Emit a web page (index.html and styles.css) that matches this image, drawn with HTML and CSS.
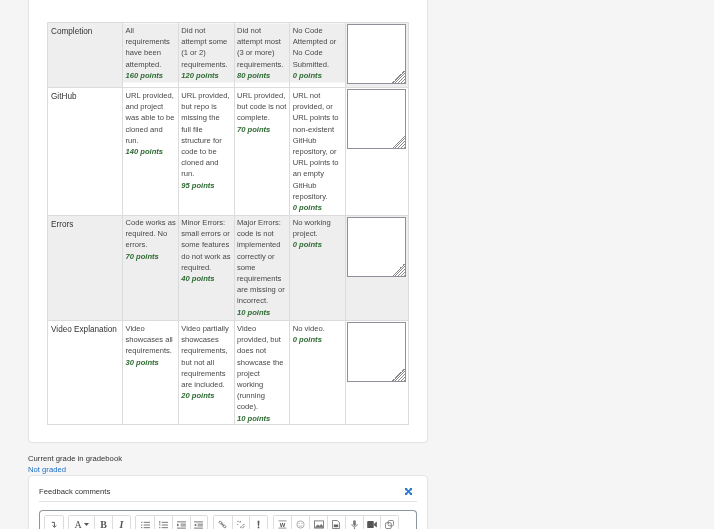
FILE: index.html
```html
<!DOCTYPE html>
<html lang="en">
<head>
  <meta charset="UTF-8" />
  <title>Grading</title>
  <link rel="stylesheet" href="styles.css">
</head>
<body>
  <div class="page">
    <div class="rubric-card">
      <table class="rubric">
        <colgroup>
          <col class="col-name"><col class="col-level"><col class="col-level"><col class="col-level"><col class="col-level"><col class="col-remark">
        </colgroup>
        <tr class="odd row-1">
          <td class="name">Completion</td>
          <td class="level"><div class="def">All requirements have been attempted.</div><div class="pts">160 points</div></td>
          <td class="level"><div class="def">Did not attempt some (1 or 2) requirements.</div><div class="pts">120 points</div></td>
          <td class="level"><div class="def">Did not attempt most (3 or more) requirements.</div><div class="pts">80 points</div></td>
          <td class="level"><div class="def">No Code Attempted or No Code Submitted.</div><div class="pts">0 points</div></td>
          <td class="remark"><textarea></textarea></td>
        </tr>
        <tr class="row-2">
          <td class="name">GitHub</td>
          <td class="level"><div class="def">URL provided, and project was able to be cloned and run.</div><div class="pts">140 points</div></td>
          <td class="level"><div class="def">URL provided, but repo is missing the<br>full file structure for code to be cloned and run.</div><div class="pts">95 points</div></td>
          <td class="level"><div class="def">URL provided, but code is not complete.</div><div class="pts">70 points</div></td>
          <td class="level"><div class="def">URL not provided, or URL points to non-existent GitHub repository, or URL points to an empty GitHub repository.</div><div class="pts">0 points</div></td>
          <td class="remark"><textarea></textarea></td>
        </tr>
        <tr class="odd row-3">
          <td class="name">Errors</td>
          <td class="level"><div class="def">Code works as required. No errors.</div><div class="pts">70 points</div></td>
          <td class="level"><div class="def">Minor Errors: small errors or some features do not work as required.</div><div class="pts">40 points</div></td>
          <td class="level"><div class="def">Major Errors: code is not implemented correctly or some requirements are missing or incorrect.</div><div class="pts">10 points</div></td>
          <td class="level"><div class="def">No working project.</div><div class="pts">0 points</div></td>
          <td class="remark"><textarea></textarea></td>
        </tr>
        <tr class="row-4">
          <td class="name">Video Explanation</td>
          <td class="level"><div class="def">Video showcases all requirements.</div><div class="pts">30 points</div></td>
          <td class="level"><div class="def">Video partially showcases requirements, but not all requirements are included.</div><div class="pts">20 points</div></td>
          <td class="level"><div class="def">Video provided, but does not showcase the project working (running code).</div><div class="pts">10 points</div></td>
          <td class="level"><div class="def">No video.</div><div class="pts">0 points</div></td>
          <td class="remark"><textarea></textarea></td>
        </tr>
      </table>
    </div>

    <div class="grade-label">Current grade in gradebook</div>
    <a class="grade-link" href="#">Not graded</a>

    <div class="feedback-card">
      <div class="feedback-head">
        <span>Feedback comments</span>
        <svg class="expand" width="7" height="7" viewBox="0 0 8 8"><path d="M0 0h3L2.2 .8 4 2.6 5.8 .8 5 0h3v3l-.8-.8L5.400 4l1.800 1.800L8 5v3H5l.8-.8L4 5.400 2.200 7.200 3 8H0V5l.8 .8L2.600 4 .8 2.200 0 3z" fill="#2a7bd0"/></svg>
      </div>
      <div class="editor">
        <div class="toolbar">
          <div class="group">
            <button><svg width="8" height="8" viewBox="0 0 9 9"><path d="M2 1.500h3v5M3 5l2 2.200L7 5" fill="none" stroke="#555" stroke-width="1.100"/></svg></button>
          </div>
          <div class="group">
            <button class="wide"><span class="serif">A</span><svg width="5" height="3" viewBox="0 0 5 3"><path d="M0 0h5L2.500 3z" fill="#555"/></svg></button>
            <button><b class="serif">B</b></button>
            <button><i class="serif"><b>I</b></i></button>
          </div>
          <div class="group">
            <button><svg width="9" height="8" viewBox="0 0 10 9"><path d="M0 1.500h1.500M0 4.500h1.500M0 7.500h1.500M3 1.500h7M3 4.500h7M3 7.500h7" stroke="#666"/></svg></button>
            <button><svg width="9" height="8" viewBox="0 0 10 9"><path d="M.8 0v3M0 4.500h1.500M0 7.500h1.500M3 1.500h7M3 4.500h7M3 7.500h7" stroke="#666"/></svg></button>
            <button><svg width="9" height="8" viewBox="0 0 10 9"><path d="M0 1h10M4 3.500h6M4 5.500h6M0 8h10" stroke="#666"/><path d="M0 2.800l2.500 1.700L0 6.200z" fill="#666"/></svg></button>
            <button><svg width="9" height="8" viewBox="0 0 10 9"><path d="M0 1h10M4 3.500h6M4 5.500h6M0 8h10" stroke="#666"/><path d="M2.500 2.800L0 4.500l2.500 1.700z" fill="#666"/></svg></button>
          </div>
          <div class="group">
            <button><svg width="9" height="9" viewBox="0 0 10 10"><path d="M1 2.500L2.500 1 5 3.500 3.500 5zM5 6.500L6.500 5 9 7.500 7.500 9zM3.500 3.500l3 3" fill="none" stroke="#777" stroke-width="1.100"/></svg></button>
            <button><svg width="9" height="9" viewBox="0 0 10 10"><path d="M1 2.500L2.500 1 4.500 3M5.500 7L7.500 9 9 7.500 7 5.500M1 5h1.500M5 1v1.500M8 5h1.500M5 7.500V9" fill="none" stroke="#999" stroke-width="1.100"/></svg></button>
            <button><svg width="3" height="9" viewBox="0 0 4 10"><path d="M.8 0h2.400L2.800 6.500H1.200zM1 7.500h2V10H1z" fill="#555"/></svg></button>
          </div>
          <div class="group">
            <button><svg width="9" height="9" viewBox="0 0 10 10"><path d="M.5 1h9M.5 9h9" stroke="#888"/><text x="5" y="7.500" font-size="6.500" font-weight="bold" text-anchor="middle" font-family="Liberation Sans" fill="#555">W</text></svg></button>
            <button><svg width="9" height="9" viewBox="0 0 10 10"><circle cx="5" cy="5" r="4" fill="none" stroke="#999" stroke-width=".9"/><path d="M3 6.200c1 1.100 3 1.100 4 0" fill="none" stroke="#999" stroke-width=".8"/><path d="M3.500 3.200v1M6.500 3.200v1" stroke="#999"/></svg></button>
            <button><svg width="10" height="9" viewBox="0 0 11 10"><rect x=".5" y="1" width="10" height="8" fill="none" stroke="#777"/><path d="M1 8l3-3 2 1.500L8 4.500 10 7v1.500H1z" fill="#777"/></svg></button>
            <button><svg width="8" height="9" viewBox="0 0 9 10"><path d="M.5 .5h5.500L8.500 3v6.500h-8z" fill="none" stroke="#777"/><rect x="2" y="5" width="5" height="3" fill="#666"/></svg></button>
            <button><svg width="7" height="10" viewBox="0 0 8 11"><rect x="2.500" y="0" width="3" height="6.500" rx="1.500" fill="#777"/><path d="M1 4.500c0 4 6 4 6 0M4 8v2M2 10.500h4" fill="none" stroke="#777"/></svg></button>
            <button><svg width="10" height="7" viewBox="0 0 11 8"><rect x="0" y="0" width="7.500" height="8" rx="1" fill="#555"/><path d="M8 3l3-2.500v7L8 5z" fill="#555"/></svg></button>
            <button><svg width="9" height="9" viewBox="0 0 10 10"><rect x=".5" y="3" width="6.500" height="6.500" rx="1.500" fill="none" stroke="#777"/><rect x="3.500" y=".5" width="6" height="6" rx="1.500" fill="none" stroke="#777"/></svg></button>
          </div>
        </div>
      </div>
    </div>
  </div>
</body>
</html>
```

FILE: styles.css
```css
html, body {
  margin: 0;
  height: 529px;
  overflow: hidden;
}
body {
  background-color: #f5f5f5;
  font-family: "Liberation Sans", Arial, sans-serif;
  color: #333;
}
.page {
  width: 400px;
  margin-left: 28px;
  will-change: transform; /* gives greyscale text like the original */
}
.rubric-card {
  background: #fff;
  border: 1px solid #e3e3e3;
  border-top: none;
  border-radius: 0 0 4px 4px;
  height: 443px;
  padding: 22px 18px 0 18px;
  box-sizing: border-box;
}
.rubric {
  border-collapse: collapse;
  table-layout: fixed;
  width: 361px;
  font-size: 7.6px;
  line-height: 11.2px;
  color: #484848;
}
.col-name { width: 75px; }
.col-level { width: 55.75px; }
.col-remark { width: 63px; }
.rubric td {
  border: 1px solid #dcdcdc;
  vertical-align: top;
  padding: 2px 2px 0 2.500px;
}
.row-1 { height: 65px; }
.row-2 { height: 128px; }
.row-3 { height: 105px; }
.row-4 { height: 104px; }
.odd .name, .odd .remark, .odd .level {
  background: #eee;
}
.row-1 .level {
  background: linear-gradient(#eee 59px, #fff 59px);
}
.rubric .row-3 .level {
  padding-top: 1px;
}
.rubric .name {
  font-size: 8.2px;
  padding-top: 3px;
  padding-left: 3px;
  color: #333;
}
.pts {
  font-style: italic;
  font-weight: bold;
  color: #2f6b33;
}
.rubric .remark {
  padding: 1px 2px 0 1px;
}
.remark textarea {
  display: block;
  box-sizing: border-box;
  width: 59px;
  height: 60px;
  margin: 0;
  padding: 0;
  border: 1px solid #8f8f9d;
  border-radius: 0;
  resize: none;
  /* the resize grip, hatched triangle in the corner */
  background-color: #fff;
  background-image:
    linear-gradient(135deg, #fff 50%, transparent 50%),
    repeating-linear-gradient(135deg, #fff 0, #fff 1px, #8a8a8a 1px, #8a8a8a 2px);
  background-size: 13px 13px;
  background-position: right bottom;
  background-repeat: no-repeat;
}
.grade-label {
  margin-top: 10px;
  font-size: 7.7px;
  line-height: 11px;
}
.grade-link {
  display: block;
  font-size: 7.7px;
  line-height: 11px;
  color: #1d6fc4;
  text-decoration: none;
}
.feedback-card {
  background: #fff;
  border: 1px solid #e3e3e3;
  border-radius: 4px;
  height: 80px;
  padding: 0 10px;
  box-sizing: border-box;
}
.feedback-head {
  display: flex;
  justify-content: space-between;
  align-items: center;
  box-sizing: border-box;
  height: 26px;
  padding-top: 5px;
  border-bottom: 1px solid #e3e3e3;
  font-size: 7.7px;
  margin-bottom: 8px;
}
.expand { margin-right: 5px; }
.editor {
  border: 1px solid #8f959e;
  border-bottom: none;
  border-radius: 4px 4px 0 0;
  padding: 4px;
  height: 40px;
  box-sizing: border-box;
}
.toolbar {
  display: flex;
  gap: 4.400px;
}
.group {
  display: flex;
  background: #fff;
  border: 1px solid #dcdcdc;
  border-radius: 2px;
}
.group button {
  width: 17.800px;
  height: 17px;
  padding: 0;
  border: none;
  border-left: 1px solid #dcdcdc;
  background: #fff;
  display: flex;
  align-items: center;
  justify-content: center;
  gap: 2px;
  color: #555;
}
.group button:first-child { border-left: none; }
.group button.wide { width: 25px; }
.serif {
  font-family: "Liberation Serif", serif;
  font-size: 10px;
  line-height: 8px;
}
```
